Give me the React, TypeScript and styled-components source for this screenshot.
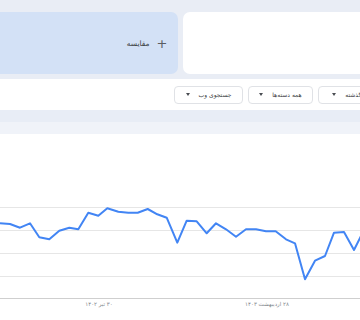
import React from "react";
import styled, { createGlobalStyle } from "styled-components";

const GlobalStyle = createGlobalStyle`
  html, body {
    margin: 0;
    padding: 0;
    background: #ffffff;
    font-family: "DejaVu Sans", "Noto Sans", sans-serif;
  }
  * {
    box-sizing: border-box;
  }
`;

// نقاط نمودار (x, y) در مختصات صفحه
const points: [number, number][] = [
  [0, 223.3], [10, 224], [20, 227.7], [30, 223.3], [39.3, 237.3],
  [49.3, 239.3], [59.3, 230.7], [69.3, 227.7], [78.3, 229.3], [88.3, 212.7],
  [98.3, 215.7], [107.3, 208.3], [118.3, 211.7], [128.3, 212.7], [137.7, 212.7],
  [147.7, 209], [157.3, 214.3], [166.7, 217.7], [177.3, 242.7], [186.7, 220.7],
  [196.7, 221.3], [206.7, 233.3], [216, 223.3], [226, 229.3], [236, 236.7],
  [246, 229.3], [256, 229.3], [266, 231.3], [275.7, 231.3], [286, 239.3],
  [295, 243.3], [305, 279.3], [315, 260.7], [325, 256], [334, 232.7],
  [344, 232], [354, 250], [364, 230],
];

const CHART_TOP = 134;
const gridLines = [207, 230, 253, 276];
const BASELINE = 298;

const App: React.FC = () => {
  const path = points
    .map(([x, y], i) => `${i === 0 ? "M" : "L"}${x} ${y - CHART_TOP}`)
    .join(" ");

  return (
    <Page>
      <GlobalStyle />
      <CompareBar>
        <TermCard />
        <CompareCard>
          <Plus>+</Plus>
          <CompareLabel>مقایسه</CompareLabel>
        </CompareCard>
      </CompareBar>
      <FilterRow>
        <Dropdown $w={76}>
          <span>۱۲ ماه گذشته</span>
          <Caret />
        </Dropdown>
        <Dropdown $w={65}>
          <span>همه دسته‌ها</span>
          <Caret />
        </Dropdown>
        <Dropdown $w={69}>
          <span>جستجوی وب</span>
          <Caret />
        </Dropdown>
      </FilterRow>
      <Band $tone="#e8edf6" />
      <Band $tone="#f0f3f9" />
      <ChartArea>
        <svg width="360" height="186" viewBox="0 0 360 186">
          {gridLines.map((y) => (
            <line
              key={y}
              x1="0"
              x2="360"
              y1={y - CHART_TOP + 0.5}
              y2={y - CHART_TOP + 0.5}
              stroke="#e6e6e6"
              strokeWidth="1"
            />
          ))}
          <line
            x1="0"
            x2="360"
            y1={BASELINE - CHART_TOP + 0.5}
            y2={BASELINE - CHART_TOP + 0.5}
            stroke="#cfcfcf"
            strokeWidth="1"
          />
          <path
            d={path}
            fill="none"
            stroke="#4285f4"
            strokeWidth="2"
            strokeLinejoin="round"
          />
          <AxisLabel x="99" y="172" textAnchor="middle" direction="rtl">
            ۳۰ تیر ۱۴۰۲
          </AxisLabel>
          <AxisLabel x="267" y="172" textAnchor="middle" direction="rtl">
            ۲۸ اردیبهشت ۱۴۰۳
          </AxisLabel>
        </svg>
      </ChartArea>
    </Page>
  );
};

const Page = styled.div`
  width: 360px;
  height: 320px;
  overflow: hidden;
  display: flex;
  flex-direction: column;
  background: #ffffff;
`;

const CompareBar = styled.div`
  direction: rtl;
  display: flex;
  gap: 5px;
  margin: 0 -100px;
  padding: 12px 0 5px;
  background: #e9edf5;
`;

const TermCard = styled.div`
  flex: 0 0 calc(50% - 2.5px);
  height: 62px;
  border-radius: 7px;
  background: #ffffff;
`;

const CompareCard = styled.div`
  flex: 0 0 calc(50% - 2.5px);
  height: 62px;
  border-radius: 7px;
  background: #d3e1f6;
  display: flex;
  align-items: center;
  gap: 7px;
  padding-right: 10px;
`;

const Plus = styled.span`
  font-family: "DejaVu Sans", sans-serif;
  font-size: 13px;
  color: #5a5d62;
  line-height: 1;
`;

const CompareLabel = styled.span`
  font-size: 7.5px;
  color: #3c4043;
`;

const FilterRow = styled.div`
  direction: rtl;
  display: flex;
  align-items: center;
  gap: 5px;
  height: 31px;
  margin-right: -34px;
  background: #ffffff;
`;

const Dropdown = styled.div<{ $w: number }>`
  width: ${(p) => p.$w}px;
  height: 18px;
  flex-shrink: 0;
  display: flex;
  align-items: center;
  justify-content: center;
  gap: 9px;
  border: 1px solid #e0e2e6;
  border-radius: 4px;
  font-size: 6px;
  color: #3c4043;
  white-space: nowrap;
`;

const Caret = styled.i`
  width: 0;
  height: 0;
  border-left: 2.5px solid transparent;
  border-right: 2.5px solid transparent;
  border-top: 3px solid #4a4d52;
`;

const Band = styled.div<{ $tone: string }>`
  height: 12px;
  flex-shrink: 0;
  background: ${(p) => p.$tone};
`;

const ChartArea = styled.div`
  flex: 1;
  background: #ffffff;
  svg {
    display: block;
  }
`;

const AxisLabel = styled.text`
  font-family: "DejaVu Sans", sans-serif;
  font-size: 5.5px;
  fill: #80868b;
`;

export default App;
